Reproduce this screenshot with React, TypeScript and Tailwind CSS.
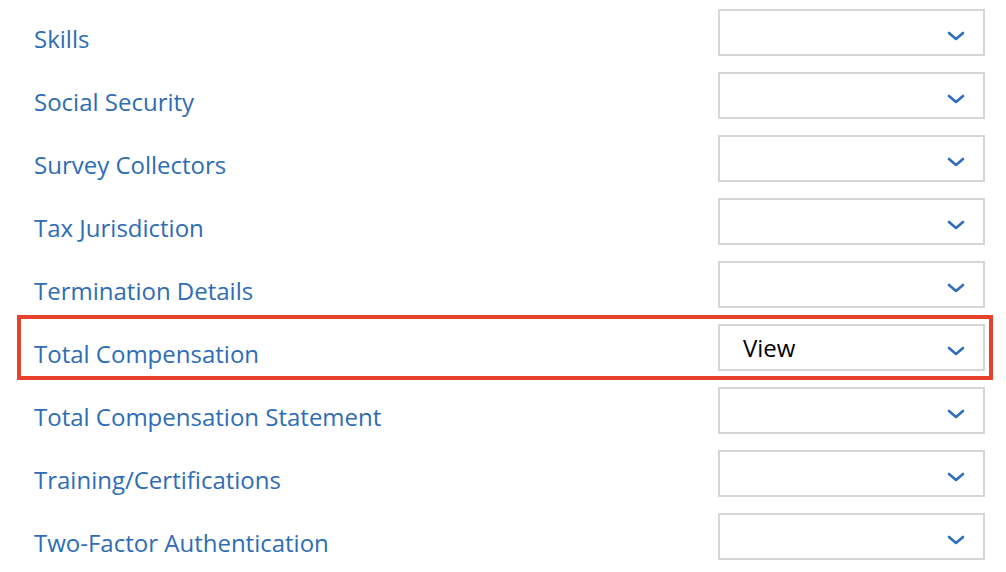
const rows = [
  { label: "Skills", value: "" },
  { label: "Social Security", value: "" },
  { label: "Survey Collectors", value: "" },
  { label: "Tax Jurisdiction", value: "" },
  { label: "Termination Details", value: "" },
  { label: "Total Compensation", value: "View", highlight: true },
  { label: "Total Compensation Statement", value: "" },
  { label: "Training/Certifications", value: "" },
  { label: "Two-Factor Authentication", value: "" },
];

function Chevron() {
  return (
    <svg width="18" height="10" viewBox="0 0 18 10" fill="none" aria-hidden="true">
      <path d="M2 2 L9 8 L16 2" stroke="#2e6dc0" strokeWidth="2.6" strokeLinecap="round" strokeLinejoin="round" />
    </svg>
  );
}

export default function App() {
  return (
    <div className="w-[1006px] h-[572px] bg-white overflow-hidden pt-[9px]" style={{ fontFamily: "'Open Sans', 'Noto Sans', sans-serif" }}>
      {rows.map((r) => (
        <div key={r.label} className="relative flex h-[63px]">
          {r.highlight && (
            <div className="absolute left-[17px] right-[13px] top-[-9px] bottom-[7px] border-[4px] border-[#e8412b] pointer-events-none" />
          )}
          <div className="flex-1 pl-[34px] pt-[15px] text-[24px] leading-[30px] text-[#2e6db5]">{r.label}</div>
          <div className="mr-[21px] flex h-[47px] w-[267px] items-center border-2 border-[#d6d6d6] pl-[23px] pr-[18px]">
            <span className="flex-1 text-[24px] leading-[30px] text-black">{r.value}</span>
            <span className="mt-[6px]">
              <Chevron />
            </span>
          </div>
        </div>
      ))}
    </div>
  );
}
